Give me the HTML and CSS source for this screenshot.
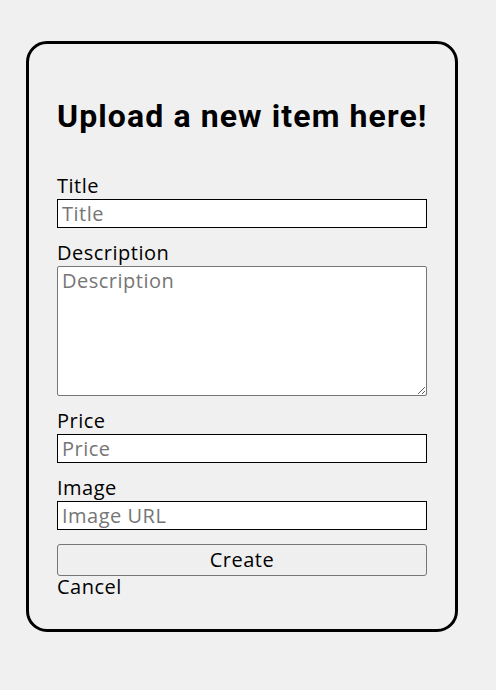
FILE: index.html
```html
<!DOCTYPE html>
<html lang="en">
<head>
<meta charset="utf-8">
<title>Upload</title>
<link rel="stylesheet" href="styles.css">
</head>
<body>
<main class="page">
  <section class="card">
    <h1 class="heading">Upload a new item here!</h1>
    <form class="form">
      <div class="field">
        <label class="label" for="title">Title</label>
        <input class="input" id="title" type="text" placeholder="Title">
      </div>
      <div class="field">
        <label class="label" for="desc">Description</label>
        <textarea class="textarea" id="desc" placeholder="Description"></textarea>
      </div>
      <div class="field">
        <label class="label" for="price">Price</label>
        <input class="input" id="price" type="text" placeholder="Price">
      </div>
      <div class="field">
        <label class="label" for="image">Image</label>
        <input class="input" id="image" type="text" placeholder="Image URL">
      </div>
      <div class="actions">
        <button class="button" type="button">Create</button>
        <a class="cancel">Cancel</a>
      </div>
    </form>
  </section>
</main>
</body>
</html>
```

FILE: styles.css
```css
html, body {
  margin: 0;
  padding: 0;
  background: #f0f0f0;
}

body {
  font-family: "Open Sans", "DejaVu Sans", sans-serif;
  color: #000;
  letter-spacing: 0.5px;
}

.page {
  padding: 41px 0 0 26px;
}

.card {
  width: 432px;
  box-sizing: border-box;
  border: 3px solid #000;
  border-radius: 21px;
  padding: 52px 28px 32px 28px;
}

.heading {
  margin: 0;
  font-family: Roboto, "Open Sans", sans-serif;
  font-size: 32px;
  line-height: 40px;
  font-weight: 700;
  letter-spacing: 1.1px;
  white-space: nowrap;
}

.form {
  margin-top: 39px;
  display: flex;
  flex-direction: column;
  gap: 14px;
}

.field {
  display: flex;
  flex-direction: column;
  gap: 2px;
}

.label {
  font-size: 20px;
  line-height: 22px;
  font-weight: 500;
}

.input,
.textarea {
  box-sizing: border-box;
  width: 370px;
  margin: 0;
  font-family: inherit;
  font-size: 20px;
  font-weight: 500;
  letter-spacing: 0.5px;
  background: #fff;
  color: #000;
  outline: none;
}

.input {
  height: 29px;
  border: 1px solid #000;
  border-radius: 0;
  padding: 0 4px;
  line-height: 27px;
}

.textarea {
  height: 130px;
  border: 1px solid #767676;
  border-radius: 2px;
  padding: 2px 4px;
  line-height: 24px;
  resize: vertical;
}

.input::placeholder,
.textarea::placeholder {
  color: #767676;
}

.actions {
  display: flex;
  flex-direction: column;
}

.button {
  box-sizing: border-box;
  width: 370px;
  height: 32px;
  margin: 0;
  font-family: inherit;
  font-size: 20px;
  font-weight: 500;
  letter-spacing: 0.5px;
  line-height: 28px;
  color: #000;
  background: #efefef;
  border: 1px solid #767676;
  border-radius: 3px;
  padding: 0;
}

.cancel {
  font-size: 20px;
  line-height: 20px;
  font-weight: 500;
  margin-top: 1px;
}
```
